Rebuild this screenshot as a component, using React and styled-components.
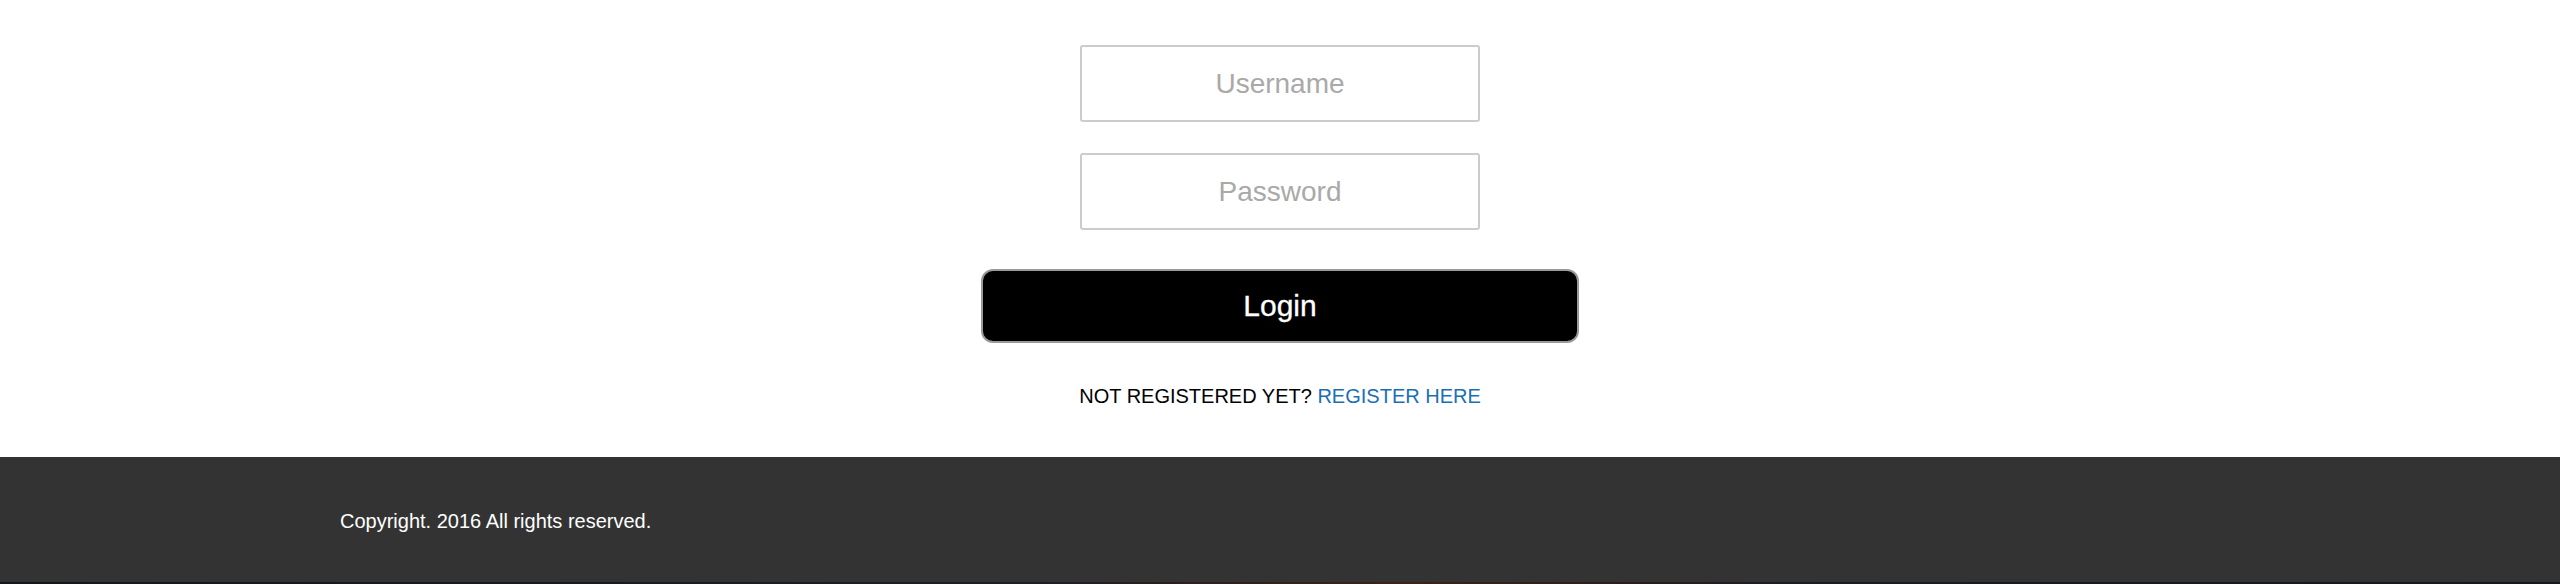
import React from "react";
import styled, { createGlobalStyle } from "styled-components";

const GlobalStyle = createGlobalStyle`
	html, body {
		margin: 0;
		padding: 0;
		background: #fff;
		font-family: "Liberation Sans", Arial, Helvetica, sans-serif;
	}
`;

const Page = styled.div`
	display: flex;
	flex-direction: column;
	height: 584px;
	overflow: hidden;
`;

const Main = styled.main`
	display: flex;
	flex-direction: column;
	align-items: center;
	padding: 45px 0 49px;
`;

const Form = styled.form`
	display: flex;
	flex-direction: column;
	align-items: center;
	margin: 0;
`;

const Field = styled.input`
	box-sizing: border-box;
	width: 400px;
	height: 77px;
	margin: 0 0 ${(props) => props.gap}px;
	padding: 0 12px;
	border: 2px solid #cccccc;
	border-radius: 3px;
	background: #fff;
	text-align: center;
	font-family: "Liberation Sans", Arial, sans-serif;
	font-size: 28px;
	color: #333;
	outline: none;

	&::placeholder {
		color: #a9a9a9;
	}
`;

const LoginButton = styled.button`
	box-sizing: border-box;
	width: 598px;
	height: 74px;
	border: 2px solid #9a9a9a;
	border-radius: 12px;
	background: #000;
	color: #fff;
	font-family: "Liberation Sans", Arial, sans-serif;
	font-size: 30px;
	-webkit-text-stroke: 0.3px #fff;
	cursor: pointer;
`;

const RegisterLine = styled.p`
	margin: 41px 0 0;
	font-size: 20px;
	line-height: 24px;
	color: #000;
`;

const RegisterLink = styled.a`
	color: #1a6fb4;
	text-decoration: none;
`;

const Footer = styled.footer`
	flex: none;
	background: #333333;
	height: 125px;
	box-sizing: border-box;
	padding-top: 52px;
`;

const FooterInner = styled.div`
	padding-left: 340px;
	color: #fff;
	font-size: 20px;
	line-height: 24px;
`;

const Backdrop = styled.div`
	flex: 1;
	background: linear-gradient(90deg, #14161a 0%, #1c1e24 40%, #3a2218 55%, #1a1c22 70%, #15171c 100%);
`;

const App = () => {
	return (
		<Page>
			<GlobalStyle />
			<Main>
				<Form onSubmit={(e) => e.preventDefault()}>
					<Field type="text" placeholder="Username" gap={31} />
					<Field type="password" placeholder="Password" gap={39} />
					<LoginButton type="submit">Login</LoginButton>
				</Form>
				<RegisterLine>
					NOT REGISTERED YET? <RegisterLink href="#">REGISTER HERE</RegisterLink>
				</RegisterLine>
			</Main>
			<Footer>
				<FooterInner>Copyright. 2016 All rights reserved.</FooterInner>
			</Footer>
			<Backdrop />
		</Page>
	);
};

export default App;
